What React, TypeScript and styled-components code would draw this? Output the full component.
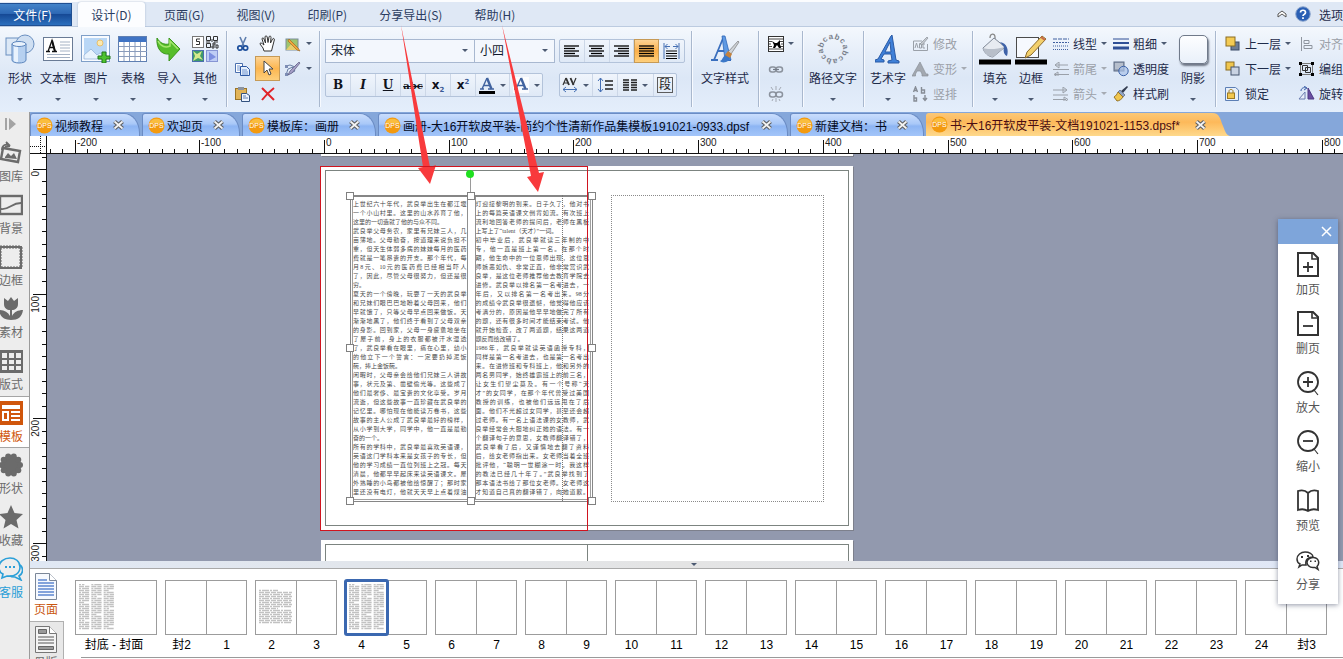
import React, { useEffect, useState } from "react";
import styled, { createGlobalStyle, css } from "styled-components";

const Global = createGlobalStyle`
  *, *::before, *::after { box-sizing: border-box; }
  body {
    margin: 0;
    overflow: hidden;
    background: #fff;
    font-family: "Liberation Sans", "Noto Sans CJK SC", sans-serif;
    font-size: 12px;
    color: #1e2b4a;
  }
  button, select { font: inherit; color: inherit; padding: 0; margin: 0; border: 0; background: none; border-radius: 0; }
  svg { display: block; flex: none; }
`;

/* ---------- frame ---------- */

const Shell = styled.div`
  position: relative;
  display: flex;
  flex-direction: column;
  height: 100vh;
  overflow: hidden;
  white-space: nowrap;
`;

const MenuBar = styled.nav`
  flex: none;
  display: flex;
  align-items: flex-end;
  height: 27px;
  border-top: 2px solid #fbfcfe;
  border-bottom: 1px solid #bccbe0;
  background: #dfe8f5;
  font-family: "Noto Sans CJK SC", sans-serif;
`;

const FileButton = styled.button`
  width: 72px;
  height: 23px;
  margin-right: 6px;
  padding-right: 6px;
  color: #fff;
  background: linear-gradient(#4383c9 0%, #2e69b5 45%, #164a96 50%, #2c6fbd 100%);
  border: 1px solid #1f4f92;
  border-left: 0;
`;

const MenuItem = styled.button<{ $active?: boolean }>`
  height: 24px;
  padding: 0 16px;
  color: #2b3c60;
  ${(p) =>
    p.$active &&
    css`
      width: 67px;
      padding: 0;
      margin: 0 3px -1px 0;
      height: 25px;
      border-radius: 3px 3px 0 0;
      background: #fcfdff;
      box-shadow: 0 0 2px #9fb0c9;
    `}
`;

const MenuEnd = styled.div`
  margin-left: auto;
  height: 24px;
  display: flex;
  align-items: center;
`;

const EndButton = styled.button`
  display: flex;
  align-items: center;
  margin-left: 8px;
`;

const Ribbon = styled.div`
  flex: none;
  display: flex;
  height: 85px;
  padding-top: 4px;
  overflow: hidden;
  background: linear-gradient(#f4f8fd 0%, #e6eef9 30%, #dce7f6 60%, #e4eefb 100%);
`;

const Group = styled.div<{ $w: number }>`
  flex: none;
  display: flex;
  width: ${(p) => p.$w}px;
  height: 76px;
  border-right: 1px solid #a9b8ce;
  box-shadow: 1px 0 0 #f7faff;
`;

const Big = styled.button<{ $w: number }>`
  flex: none;
  width: ${(p) => p.$w}px;
  display: flex;
  flex-direction: column;
  align-items: center;
`;

const BigIcon = styled.span`
  height: 36px;
  display: flex;
  align-items: center;
  justify-content: center;
`;

const BigLabel = styled.span`
  height: 24px;
  line-height: 24px;
`;

const CaretShape = styled.i<{ $dim?: boolean }>`
  flex: none;
  display: block;
  width: 0;
  height: 0;
  border: 3px solid transparent;
  border-bottom: 0;
  border-top-color: ${(p) => (p.$dim ? "#a6abb3" : "#4c5a72")};
`;

const BigCaret = styled(CaretShape)`
  margin-top: 7px;
`;

const Stack = styled.div<{ $w: number }>`
  flex: none;
  width: ${(p) => p.$w}px;
`;

const Small = styled.button<{ $dim?: boolean }>`
  display: flex;
  align-items: center;
  gap: 4px;
  height: 25px;
  color: ${(p) => (p.$dim ? "#9ba0a8" : "#1e2b4a")};
`;

const IconSlot = styled.span`
  width: 17px;
  display: flex;
  justify-content: center;
`;

const ToolGrid = styled.div`
  display: grid;
  grid-template-columns: 25px 25px 25px 8px;
  grid-auto-rows: 25px;
  padding-left: 3px;
`;

const ToolButton = styled.button<{ $on?: boolean }>`
  display: flex;
  align-items: center;
  justify-content: center;
  ${(p) =>
    p.$on &&
    css`
      background: linear-gradient(#fdd394, #fcb650 50%, #fecf7b);
      border: 1px solid #c69a56;
    `}
`;

const FontRows = styled.div`
  display: flex;
  flex-direction: column;
  gap: 10px;
  padding: 8px 0 0 5px;
`;

const FontRow = styled.div`
  display: flex;
  justify-content: space-between;
  width: 360px;
  height: 24px;
`;

const Bar = styled.div<{ $w: number }>`
  display: flex;
  width: ${(p) => p.$w}px;
  border: 1px solid #b3c3da;
  border-radius: 2px;
  background: linear-gradient(#f0f5fc, #dfe9f6);
`;

const BarSet = styled.div<{ $w: number }>`
  display: flex;
  width: ${(p) => p.$w}px;
`;

const BarButton = styled.button<{ $w?: number; $on?: boolean }>`
  flex: 1 1 ${(p) => p.$w ?? 25}px;
  display: flex;
  align-items: center;
  justify-content: center;
  gap: 5px;
  border-right: 1px solid #ccd7e7;
  &:last-child { border-right: 0; }
  ${(p) =>
    p.$on &&
    css`
      background: linear-gradient(#fdd394, #fcb04a 50%, #fecf7b);
      border: 1px solid #c69a56;
      margin: -1px 0;
    `}
`;

const SelectWrap = styled.label<{ $w: number }>`
  position: relative;
  display: block;
  width: ${(p) => p.$w}px;
  border: 1px solid #a8b8d0;
  background: #f3f7fd;
  & + & { border-left: 0; }
  select {
    appearance: none;
    width: 100%;
    height: 22px;
    padding-left: 5px;
    color: #10182c;
    outline: 0;
  }
  i { position: absolute; right: 6px; top: 9px; }
`;

const Glyph = styled.span<{ $kind?: "i" | "u" | "s" | "x" }>`
  font-family: ${(p) => (p.$kind === "x" ? '"DejaVu Sans", sans-serif' : '"DejaVu Serif", "Liberation Serif", serif')};
  font-weight: 700;
  font-size: ${(p) => (p.$kind === "s" ? 10 : 12)}px;
  color: #10131c;
  font-style: ${(p) => (p.$kind === "i" ? "italic" : "normal")};
  text-decoration: ${(p) => (p.$kind === "u" ? "underline" : p.$kind === "s" ? "line-through" : "none")};
  sub, sup { font-size: 7px; line-height: 0; color: #3a5a96; }
`;

/* ---------- body ---------- */

const Body = styled.div`
  flex: 1;
  min-height: 0;
  display: flex;
`;

const Side = styled.aside`
  flex: none;
  width: 30px;
  background: #ededed;
  border-right: 1px solid #9b9b9b;
  overflow: hidden;
`;

const SideToggle = styled.button`
  display: flex;
  align-items: center;
  width: 29px;
  height: 24px;
  padding-left: 5px;
`;

const SideItem = styled.button<{ $tone?: string; $active?: boolean }>`
  display: flex;
  flex-direction: column;
  align-items: flex-start;
  gap: 3px;
  width: 30px;
  height: 52px;
  padding-top: 5px;
  color: ${(p) => p.$tone ?? "#6b6b6b"};
  span { margin-left: -1px; line-height: 18px; }
  ${(p) =>
    p.$active &&
    css`
      background: #fff;
      border-top: 1px solid #a5a5a5;
      border-bottom: 1px solid #a5a5a5;
      padding-top: 4px;
    `}
`;

const Main = styled.main`
  flex: 1;
  min-width: 0;
  display: flex;
  flex-direction: column;
`;

const Tabs = styled.div`
  flex: none;
  display: flex;
  align-items: flex-end;
  gap: 2px;
  height: 24px;
  background: #85a7da;
`;

const Tab = styled.div<{ $w: number; $active?: boolean }>`
  flex: none;
  position: relative;
  display: flex;
  align-items: center;
  width: ${(p) => p.$w}px;
  height: 23px;
  padding-left: 5px;
  color: #050a1c;
  border: 1px solid #6b8cc4;
  border-bottom: 0;
  border-radius: 3px 16px 0 0 / 3px 20px 0 0;
  background: linear-gradient(#c9ddfd 0%, #a9c8f8 45%, #8db5f3 55%, #a3c5f9 100%);
  ${(p) =>
    p.$active &&
    css`
      color: #4a0d12;
      border: 0;
      margin-right: 18px;
      border-radius: 3px 0 0 0;
      background: linear-gradient(#fbc877 0%, #fdb95a 40%, #fed98c 100%);
    `}
`;

const TabTitle = styled.button`
  display: flex;
  align-items: center;
  gap: 2px;
`;

const TabClose = styled.button<{ $active?: boolean }>`
  margin-left: auto;
  margin-right: ${(p) => (p.$active ? 5 : 14)}px;
`;

const TabTail = styled.svg`
  position: absolute;
  left: 100%;
  top: 0;
`;

const RulerRow = styled.div`
  flex: none;
  display: flex;
  height: 18px;
  background: #fff;
  border-bottom: 1px solid #111;
`;

const Corner = styled.div`
  flex: none;
  width: 17px;
  border-right: 1px solid #111;
`;

const Track = styled.div`
  flex: 1;
  min-width: 0;
  overflow: hidden;
`;

const CanvasRow = styled.div`
  flex: 1;
  min-height: 0;
  display: flex;
`;

const VRuler = styled.div`
  flex: none;
  width: 17px;
  background: #fff;
  border-right: 1px solid #111;
  overflow: hidden;
`;

const Canvas = styled.div`
  flex: 1;
  min-width: 0;
  padding-left: 274px;
  display: flex;
  flex-direction: column;
  gap: 10px;
  overflow: hidden;
  background: #9299ae;
`;

const PrevEdge = styled.div`
  flex: none;
  width: 532px;
  height: 2px;
  background: #fff;
  box-shadow: 1px 1px 0 #7d808c;
`;

const Spread = styled.div`
  flex: none;
  position: relative;
  display: flex;
  width: 532px;
  height: 364px;
  padding: 4px;
  background: #fff;
  box-shadow: 1px 1px 0 #7d808c;
`;

const Trim = styled.div`
  flex: 1;
  display: flex;
  border: 1px solid #7c8480;
`;

const Half = styled.div`
  flex: 1;
  & + & { border-left: 1px solid #7c8480; }
`;

const PageMark = styled.div`
  position: absolute;
  z-index: 1;
  left: -1px;
  top: 0;
  width: 268px;
  height: 365px;
  border: 1px solid #d0141f;
  pointer-events: none;
`;

const Margin = styled.div`
  position: absolute;
  left: 290px;
  top: 29px;
  width: 213px;
  height: 307px;
  border: 1px dotted #8a8a8a;
`;

const Frame = styled.div`
  position: absolute;
  left: 29px;
  top: 29px;
  width: 243px;
  height: 307px;
  border: 1px solid #868686;
  border-top-width: 2px;
`;

const FrameInner = styled.div`
  display: flex;
  gap: 7px;
  height: 303px;
  margin: 0 1px;
  border: 1px solid #a0a0a0;
  border-top: 0;
`;

const TextColumn = styled.div`
  flex: 1;
  min-width: 0;
  padding-top: 3px;
  border: solid #909090;
  border-width: 0 1px 0 0;
  & + & { border-width: 0 0 0 1px; margin-right: 1px; }
  font-family: "Liberation Serif", "Noto Sans CJK SC", serif;
  font-size: 6px;
  color: #4a4a4a;
`;

const Line = styled.div<{ $end: boolean }>`
  height: 9px;
  line-height: 9px;
  white-space: normal;
  overflow: hidden;
  text-align-last: ${(p) => (p.$end ? "left" : "justify")};
`;

const Guide = styled.div`
  position: absolute;
  left: 241px;
  top: 29px;
  width: 0;
  height: 306px;
  border-left: 1px dotted #777;
`;

const Handle = styled.i<{ $x: number; $y: number }>`
  position: absolute;
  left: ${(p) => p.$x}px;
  top: ${(p) => p.$y}px;
  z-index: 2;
  width: 8px;
  height: 8px;
  background: #fff;
  border: 1px solid #808080;
`;

const Stalk = styled.i`
  position: absolute;
  left: 149px;
  top: 8px;
  width: 1px;
  height: 18px;
  background: #9a9a9a;
  &::before {
    content: "";
    position: absolute;
    left: -4px;
    top: -4px;
    width: 8px;
    height: 8px;
    border-radius: 50%;
    background: #1fe01f;
  }
`;

/* ---------- page panel ---------- */

const Splitter = styled.button`
  flex: none;
  display: flex;
  justify-content: center;
  align-items: center;
  height: 8px;
  padding-left: 14px;
  background: linear-gradient(90deg, #e0e8f4, #e4e4e4 50%, #e0e8f8);
  border-bottom: 1px solid #a9a9a9;
`;

const Pages = styled.section`
  flex: none;
  display: flex;
  height: 90px;
  background: #fff;
  overflow: hidden;
`;

const PageTabs = styled.div`
  flex: none;
  width: 34px;
`;

const PageTab = styled.button<{ $active?: boolean }>`
  display: flex;
  flex-direction: column;
  align-items: center;
  width: 34px;
  height: 53px;
  padding: 4px 2px 0 0;
  line-height: 18px;
  gap: 1px;
  color: ${(p) => (p.$active ? "#c9560f" : "#6b6b6b")};
  background: ${(p) => (p.$active ? "#fff" : "#e8e8e8")};
  border-right: ${(p) => (p.$active ? "0" : "1px solid #b0b0b0")};
  border-bottom: 1px solid #b0b0b0;
`;

const PageList = styled.div`
  flex: 1;
  min-width: 0;
  padding-left: 4px;
  overflow: hidden;
`;

const Thumbs = styled.div`
  display: flex;
  height: 88px;
`;

const Thumb = styled.button`
  flex: none;
  width: 90px;
  display: flex;
  flex-direction: column;
  padding: 11px 0 0 7px;
  color: #000;
`;

const Sheet = styled.span`
  display: flex;
  width: 82px;
  height: 55px;
  border: 1px solid #9c9c9c;
`;

const Leaf = styled.span<{ $sel?: boolean }>`
  flex: 1;
  padding: 3px 2px;
  & + & { border-left: 1px solid #9c9c9c; }
  ${(p) =>
    p.$sel &&
    css`
      outline: 3px solid #3b68b0;
      outline-offset: -1px;
      border-radius: 1px;
      z-index: 1;
    `}
`;

const Labels = styled.span`
  display: flex;
  width: 90px;
  margin: 0 0 0 -6px;
  height: 20px;
  line-height: 20px;
  text-align: center;
  span { flex: 1; }
`;

const ScrollEdge = styled.div`
  height: 3px;
  margin-left: 13px;
  border-top: 1px solid #9a9a9a;
`;

/* ---------- floating palette ---------- */

const Palette = styled.aside`
  position: absolute;
  top: 219px;
  right: 5px;
  width: 60px;
  height: 385px;
  background: #fff;
  box-shadow: 0 1px 5px rgba(40, 50, 80, 0.5);
`;

const PaletteHead = styled.div`
  display: flex;
  align-items: center;
  justify-content: flex-end;
  height: 25px;
  padding-right: 6px;
  margin-bottom: 7px;
  background: #7ea5da;
`;

const PaletteItem = styled.button`
  display: flex;
  flex-direction: column;
  align-items: center;
  width: 60px;
  height: 59px;
  padding-top: 1px;
  color: #555;
  line-height: 18px;
  gap: 3px;
`;

const Arrows = styled.svg`
  position: absolute;
  left: 0;
  top: 0;
  pointer-events: none;
`;

/* ---------- icons ---------- */

const I = ({ w = 16, h, v, children }: { w?: number; h?: number; v?: string; children: React.ReactNode }) => (
  <svg width={w} height={h ?? w} viewBox={v ?? `0 0 ${w} ${h ?? w}`} fill="none">
    {children}
  </svg>
);

const Caret = ({ dim }: { dim?: boolean }) => <CaretShape $dim={dim} />;

const ShapesIcon = () => (
  <I w={30}>
    <rect x="1" y="4" width="18" height="17" fill="#dce8f6" stroke="#6a8fc0" />
    <circle cx="20" cy="10" r="9" fill="#cfdff2" stroke="#6a8fc0" />
    <path d="M7 10v16c0 4 14 4 14 0V10z" fill="#b6d0f0" stroke="#5d86bd" />
    <path d="M9 12v15c1 1 3 1 4 1V12z" fill="#e8f2fd" />
    <ellipse cx="14" cy="10" rx="7" ry="2.5" fill="#e9f2fc" stroke="#5d86bd" />
  </I>
);
const TextBoxIcon = () => (
  <I w={30} h={26}>
    <rect x=".5" y="1.500" width="29" height="23" fill="#fff" stroke="#6a7b95" />
    <path d="M3 15.500h4M9 15.500h5M5 15.500l4-11 3 11M6 11.500h5" stroke="#111" strokeWidth="1.300" />
    <path d="M9 4.500l3 11" stroke="#111" strokeWidth="2" />
    <path d="M17 6h10M17 9h10M17 12h10M17 15h10M4 18.500h23M4 21.500h23" stroke="#a5b2c4" />
  </I>
);
const PictureIcon = () => (
  <I w={30} h={28}>
    <rect x=".5" y=".5" width="28" height="26" fill="#f8fbff" stroke="#7f9fc8" />
    <rect x="3" y="3" width="23" height="21" fill="#b9d7f6" />
    <circle cx="19" cy="8" r="3" fill="#fbe9b0" stroke="#e9bf6b" />
    <path d="M3 24v-4l7-6 6 6 3-2 7 5v1z" fill="#e9f3fd" stroke="#8caed6" strokeWidth=".7" />
    <path d="M21 17h4v4h4v3h-4v4h-4v-4h-4v-3h4z" fill="#4cc22e" stroke="#23751a" />
  </I>
);
const TableIcon = () => (
  <I w={30} h={28}>
    <rect x=".5" y="1.500" width="28" height="25" fill="#fff" stroke="#5f7fb2" />
    <path d="M1 2h27v5H1z" fill="#3f73c4" />
    <path d="M6 7v19M11.500 7v19M17 7v19M22.500 7v19M1 11.500h28M1 16.500h28M1 21.500h28" stroke="#8a9cbc" />
  </I>
);
const ImportIcon = () => (
  <I w={28} h={28}>
    <path d="M2 3c3 5 7 7 12 6V3l11 11-11 12v-7C7 20 1 14 2 3z" fill="#56bd2b" stroke="#3a961c" />
    <path d="M3 6c3 6 8 7 12 5V6l8 8" stroke="#a5e66e" strokeWidth="1.500" />
  </I>
);
const OtherIcon = () => (
  <I w={28} h={28}>
    <rect x="1.500" y="1.500" width="11" height="11" fill="#fff" stroke="#777" />
    <path d="M9 4H5.500v2.500h3v3H5" stroke="#333" />
    <path d="M15.500 1.500h4v4h-4zM22.500 1.500h4v4h-4zM15.500 8.500h4v4h-4zM22 8h2v2h-2zM25 10h2v3h-2zM21 11h2v2h-2zM21 4v3M15 7h4M23 7h4" stroke="#333" />
    <rect x="1.500" y="15.500" width="11" height="11" fill="#3f9a6a" stroke="#4a6fae" />
    <path d="M2 16l4 3 5-3-2 5 3 4-5-2-5 3 2-5z" fill="#d6e98c" />
    <rect x="15.500" y="15.500" width="11" height="11" fill="#bfcdf5" stroke="#8795d4" />
    <path d="M18 17l7 5-7 4z" fill="#7d8fe0" />
  </I>
);
const CutIcon = () => (
  <I w={16}>
    <path d="M5 1l4 9M11 1L7 10" stroke="#5f7eae" strokeWidth="1.600" />
    <circle cx="5" cy="12" r="2.200" stroke="#1d4f9c" strokeWidth="1.700" />
    <circle cx="10.500" cy="12" r="2.200" stroke="#1d4f9c" strokeWidth="1.700" />
  </I>
);
const HandIcon = () => (
  <I w={18}>
    <path d="M5 16l-1-3-3-4c0-1.500 1.500-1.500 2.500 0L5 10 3 4c0-1.500 1.700-1.500 2 0l1.500 4L6 2c0-1.500 2-1.500 2.200 0L9 7.500 10 2c.3-1.500 2-1.200 2 .3L11.500 8l2-4c.8-1.200 2.200-.5 1.800 1L13.500 12l-1 4z" fill="#fff" stroke="#333" />
  </I>
);
const PicEditIcon = () => (
  <I w={16}>
    <rect x="1" y="3" width="12" height="11" fill="#9fc46b" stroke="#7b8d9c" />
    <path d="M1 14l6-7 6 7z" fill="#e7ce6c" />
    <path d="M4 3l9 9 2 3-3-1-9-9z" fill="#f4a53b" stroke="#9c6a24" strokeWidth=".7" />
  </I>
);
const CopyIcon = () => (
  <I w={17} h={16}>
    <path d="M1.500 2.500h7v9h-7z" fill="#fff" stroke="#4a6fae" />
    <path d="M6.500 5.500h6l3 3v6h-9z" fill="#e6effb" stroke="#2c57a2" />
    <path d="M3 5h3M3 7h3M3 9h3M8 9h5M8 11h6M8 13h6" stroke="#6f93cf" />
  </I>
);
const PointerIcon = () => (
  <I w={12} h={17}>
    <path d="M2 1v12l3-3 2 5 2-1-2-5h4z" fill="#fff" stroke="#444" />
  </I>
);
const WandIcon = () => (
  <I w={17} h={16}>
    <path d="M2 5l4-1 5 2 2-3M2 14l2-6 5-2M3 14l8-4-3-4" stroke="#6b7fa6" />
    <path d="M1 4h3v3H1zM1 12h3v3H1z" fill="#7d8db4" />
    <path d="M15 1l-9 9-2 4 4-2 8-10z" fill="#a7a0c8" stroke="#5a5a80" strokeWidth=".7" />
  </I>
);
const PasteIcon = () => (
  <I w={17} h={16}>
    <rect x="1.500" y="2.500" width="11" height="11" fill="#e2b457" stroke="#9b7426" />
    <rect x="4" y="1" width="6" height="3" fill="#8c94a0" />
    <path d="M7.500 7.500h5l3 2v6h-8z" fill="#eef4fd" stroke="#33527f" />
    <path d="M9 10h3M9 12h5" stroke="#6380b0" />
  </I>
);
const DeleteIcon = () => (
  <I w={16}>
    <path d="M2 2c4 4 8 8 12 12M14 2C9 6 5 10 2 14" stroke="#e0242a" strokeWidth="2" />
  </I>
);

const lines: Record<string, [number, number][]> = {
  left: [[0, 15], [0, 11], [0, 15], [0, 11], [0, 15]],
  center: [[0, 15], [2, 13], [0, 15], [2, 13], [0, 15]],
  right: [[0, 15], [4, 15], [0, 15], [4, 15], [0, 15]],
  full: [[0, 15], [0, 15], [0, 15], [0, 15], [0, 15]],
};
const AlignIcon = ({ kind }: { kind: string }) => (
  <I w={15} h={13}>
    {lines[kind].map(([a, b], i) => (
      <path key={i} d={`M${a} ${i * 2.5 + 1}H${b}`} stroke="#000" strokeWidth="1.300" />
    ))}
  </I>
);
const SpreadIcon = () => (
  <I w={17} h={16}>
    <path d="M1 0v16M16 0v16" stroke="#4670b4" />
    <path d="M2 3.500h5M4.500 1L2 3.500 4.500 6M15 3.500h-5M12.500 1L15 3.500 12.500 6" stroke="#4670b4" />
    <path d="M3 8h11M3 10.500h11M3 13h11M3 15.500h11" stroke="#000" />
  </I>
);
const FontColorIcon = ({ bar }: { bar?: boolean }) => (
  <I w={16} h={17}>
    {!bar && <rect width="16" height="16" fill="#fff" opacity=".8" />}
    <path d="M1 12h4M9 12h6M3 12L8 1M5 8.500h6" stroke="#41639f" strokeWidth="1.400" />
    <path d="M8 1l4.500 11" stroke="#41639f" strokeWidth="2.400" />
    {bar && <path d="M0 15.500h16" stroke="#000" strokeWidth="3" />}
  </I>
);
const KernIcon = () => (
  <I w={16}>
    <path d="M1 8l3-7M2 6h4M14 1l-3 7" stroke="#333" strokeWidth="1.200" />
    <path d="M4 1l3 7M8.500 1l3 7" stroke="#333" strokeWidth="1.900" />
    <path d="M1 12.500h14M4 10l-3 2.500L4 15M12 10l3 2.500L12 15" stroke="#4670b4" />
  </I>
);
const LeadIcon = () => (
  <I w={16}>
    <path d="M3.500 1v14M1 4l2.500-3L6 4M1 12l2.500 3L6 12" stroke="#4670b4" />
    <path d="M8 4h8M8 8h8M8 12h8" stroke="#222" strokeWidth="1.500" />
  </I>
);
const ColumnsIcon = () => (
  <I w={14} h={12}>
    <path d="M0 1h6M0 3.500h6M0 6h6M0 8.500h6M0 11h6M8 1h6M8 3.500h6M8 6h6M8 8.500h6M8 11h6" stroke="#222" strokeWidth="1.300" />
  </I>
);
const ParaBox = styled.span`
  width: 16px;
  height: 16px;
  line-height: 14px;
  text-align: center;
  color: #222;
  border: 1px solid #5c5c5c;
`;
const TextStyleIcon = () => (
  <I w={30} h={32}>
    <path d="M1 27h7M4 27L14 3M7 18h9M12 27h9" stroke="#3a6fbe" strokeWidth="1.800" />
    <path d="M12 3h3l6 24h-6z" fill="#5f9ae3" stroke="#2f66b8" strokeWidth=".8" />
    <path d="M29 9L21 21l-3-2L28 8z" fill="#cfd3d8" stroke="#7a7a7a" strokeWidth=".7" />
    <path d="M20 22c1 3-1 6-4 7-3 1-5 0-6-1 3-1 3-6 7-7z" fill="#3b78c8" />
    <path d="M18 18l4 3-2 4-5-3z" fill="#c5823c" />
  </I>
);
const WrapIcon = () => (
  <I w={16}>
    <rect x=".5" y=".5" width="15" height="15" fill="#fff" stroke="#333" />
    <path d="M1 3h14M1 13h14M1 5.500h3M12 5.500h3M1 8h2M13 8h2M1 10.500h3M12 10.500h3" stroke="#444" />
    <path d="M4 5l3 2h2l3-3v4l1 4h-2L9 9l-2 3H5l1-3z" fill="#000" />
  </I>
);
const LinkIcon = ({ broken }: { broken?: boolean }) => (
  <I w={16}>
    <rect x="1.500" y="6" width="6.500" height="5" rx="2.500" stroke="#8b929d" strokeWidth="1.500" />
    <rect x="8" y="6" width="6.500" height="5" rx="2.500" stroke="#8b929d" strokeWidth="1.500" />
    {!broken && <path d="M5 8.500h6" stroke="#757c88" strokeWidth="1.200" />}
    {broken && <path d="M8 0v4M3 1l2 3M13 1l-2 3M8 12v4M4 15l1-2M12 15l-1-2" stroke="#a3a9b3" />}
  </I>
);
const PathGlyph = styled.text`
  font: 700 8px "Liberation Sans", sans-serif;
  fill: #7b818c;
  text-anchor: middle;
`;
const PathTextIcon = () => (
  <I w={32} h={32}>
    {"abcabcabcabc".split("").map((c, i) => (
      <PathGlyph key={i} x="16" y="6" transform={`rotate(${i * 30 - 100} 16 16)`}>
        {c}
      </PathGlyph>
    ))}
  </I>
);
const WordArtIcon = () => (
  <I w={26} h={30}>
    <path d="M17 1l4 25 3 1v2H13v-2l4-1-1-6H9l-3 5 3 1v2H0v-2l3-1L16 2zM15 8l-5 10h6z" fill="#3f80d8" stroke="#2a5aa5" fillRule="evenodd" />
  </I>
);
const ModifyIcon = () => (
  <I w={17} h={16}>
    <path d="M10 5H1.500v9.500h14V8" stroke="#9aa0a8" />
    <path d="M3 12l1.500-5L6 12M7.500 7.500V12h2V7.500zM13 8h-2v4h2" stroke="#9aa0a8" />
    <path d="M8 8l7-7 1 1-6 7z" fill="#c6cad0" stroke="#8a9098" strokeWidth=".7" />
  </I>
);
const WarpIcon = () => (
  <I w={17} h={16}>
    <path d="M8 1l6 12h2v2h-6v-2L8.500 10H5l-1.500 3v2H0z" fill="#a3a8b0" stroke="#8a9098" strokeWidth=".7" />
  </I>
);
const VerticalIcon = () => (
  <I w={17} h={16}>
    <path d="M1.500 6l2-5 2 5M2.300 4.500h2.500M2 9v6h2.500V12H2M9.500 1v6h3V4H9.500M13 9v5M11 12l2 2.500 2-2.500" stroke="#868c95" strokeWidth="1.400" />
  </I>
);
const FillIcon = () => (
  <I w={32} h={32}>
    <path d="M11 5C11 0 16 0 16 4v6" stroke="#888" strokeWidth="1.300" />
    <path d="M4 15L15 5l11 9-12 10c-4 0-9-4-10-9z" fill="#e7ebf1" stroke="#7f8896" />
    <path d="M4 15c5 2 15 1 22-1L14 24c-4 0-9-4-10-9z" fill="#b8bfca" />
    <path d="M21 9c7 1 9 8 7 14-3-1-4-5-3-9z" fill="#3e62a8" />
    <path d="M0 29h32" stroke="#000" strokeWidth="5" />
  </I>
);
const BorderIcon = () => (
  <I w={32} h={32}>
    <rect x="1.500" y="4.500" width="22" height="20" fill="#f6f9fe" stroke="#4b4b4b" />
    <path d="M12 19L27 3l4 3-15 16-6 3z" fill="#f3d06c" stroke="#8b6a2c" />
    <path d="M26 4l4 3" stroke="#c96a4a" strokeWidth="2" />
    <path d="M0 29h32" stroke="#000" strokeWidth="5" />
  </I>
);
const DashIcon = () => (
  <I w={16} h={12}>
    <path d="M0 1h16" stroke="#4060a0" strokeDasharray="4 1" />
    <path d="M0 4.500h16" stroke="#4060a0" strokeDasharray="2 1" />
    <path d="M0 8h16M0 11.500h16" stroke="#4060a0" strokeDasharray="1 1" />
  </I>
);
const ArrowLinesIcon = ({ flip }: { flip?: boolean }) => (
  <I w={16} h={14}>
    {flip ? (
      <path d="M0 3h13M10 0l4 3-4 3zM0 8h15M0 12.500h13M11 10l4 2.500-4 2.500z" stroke="#9aa0a9" />
    ) : (
      <path d="M2 3h13M6 0L2 3l4 3zM0 7.500h16M2 12.500h14M5 10l-4 2.500 4 2.500z" stroke="#9aa0a9" />
    )}
  </I>
);
const WeightIcon = () => (
  <I w={16} h={12}>
    <path d="M0 1h16" stroke="#2f4f96" />
    <path d="M0 5h16" stroke="#2f4f96" strokeWidth="2" />
    <path d="M0 10h16" stroke="#2f4f96" strokeWidth="3" />
  </I>
);
const OpacityIcon = () => (
  <I w={16}>
    <rect x="1" y="1" width="10" height="9" fill="#97a2b4" stroke="#5d6b83" />
    <path d="M2 3h8M2 5h8M2 7h8" stroke="#d5dbe5" />
    <circle cx="10.500" cy="10" r="4.700" fill="#a9c2e8" fillOpacity=".7" stroke="#3c62a8" />
  </I>
);
const BrushIcon = () => (
  <I w={16}>
    <path d="M15 1l-5 6-2-2 6-5z" fill="#333c50" />
    <path d="M7 4l5 5-2 2-5-5z" fill="#8fa3c4" stroke="#55617a" strokeWidth=".7" />
    <path d="M5 6l5 5c-1 2-4 4-6 4l-3-4c2-1 3-3 4-5z" fill="#f0c64e" stroke="#94742a" />
  </I>
);
const ShadowSwatch = styled.span`
  width: 29px;
  height: 29px;
  border: 1px solid #707a8a;
  border-radius: 5px;
  background: linear-gradient(#fdfeff, #e9f0fa);
  box-shadow: 1px 2px 2px #6f7887;
`;
const LayerIcon = ({ down }: { down?: boolean }) => (
  <I w={15}>
    {down ? (
      <>
        <rect x="1" y="1" width="8" height="8" fill="#f0c64e" stroke="#8a6d22" />
        <rect x="6" y="6" width="8" height="8" fill="#c9d3e3" stroke="#44546f" />
      </>
    ) : (
      <>
        <rect x="6" y="6" width="8" height="8" fill="#6d7c95" stroke="#3a4a66" />
        <rect x="1" y="1" width="9" height="9" fill="#f4cb54" stroke="#8a6d22" />
      </>
    )}
  </I>
);
const LockIcon = () => (
  <I w={15}>
    <path d="M.5 1.500h10l3 2.500v10.500H.5z" fill="#e7effa" stroke="#5c7fb5" />
    <path d="M4 7V5c0-2 4-2 4 0v2" stroke="#9c7a25" />
    <rect x="2.500" y="7" width="7" height="5.500" fill="#f2c74e" stroke="#9c7a25" />
  </I>
);
const AlignObjIcon = () => (
  <I w={14}>
    <path d="M1.500 0v14M4 3.500h5v3H4zM4 8.500h8v3H4z" stroke="#8f959e" />
  </I>
);
const GroupIcon = () => (
  <I w={17} h={16}>
    <path d="M2.500 2.500h12v11h-12z" stroke="#777" />
    <path d="M4.500 4.500h5v5h-5zM7.500 6.500h5v5h-5z" stroke="#333" />
    <path d="M1 1h3v3H1zM13 1h3v3h-3zM1 12h3v3H1zM13 12h3v3h-3z" fill="#000" />
  </I>
);
const RotateIcon = () => (
  <I w={17} h={15}>
    <path d="M1 13l6-7v7z" fill="#e9eefa" stroke="#6a7cae" />
    <path d="M10 2l6 11h-6z" fill="#6a4ea0" stroke="#4d3a84" />
    <path d="M3 5c0-3 3-4 5-3M6 0l3 2-3 2" stroke="#3b5fa8" />
  </I>
);
const DpsIcon = () => (
  <svg width="17" height="17" viewBox="0 0 17 17">
    <circle cx="8.500" cy="8.500" r="8" fill="#f39a10" />
    <path d="M1.500 6a8 8 0 0 1 14 0z" fill="#fbc64a" opacity=".8" />
    <text x="8.500" y="11" textAnchor="middle" fontSize="7" fontFamily="Liberation Sans, sans-serif" fill="#fff">
      DPS
    </text>
  </svg>
);
const CloseIcon = () => (
  <I w={13} h={12}>
    <path d="M2.500 2.500l8 7M10.500 2.500l-8 7" stroke="#5f6266" strokeWidth="4.200" />
    <path d="M2.500 2.500l8 7M10.500 2.500l-8 7" stroke="#f4f4f4" strokeWidth="1.700" />
  </I>
);

const sideItems: { label: string; tone?: string; active?: boolean; icon: React.ReactNode }[] = [
  {
    label: "图库",
    icon: (
      <I w={23} h={24}>
        <path d="M3 7l17 3-2 11-17-3z" stroke="currentColor" strokeWidth="2.400" />
        <path d="M5 16l3-4 3 3 3-3 3 6-12-1z" fill="currentColor" />
        <path d="M2 9c0-5 4-7 8-4L6 1M10 5l-5 1" stroke="currentColor" strokeWidth="1.800" />
      </I>
    ),
  },
  {
    label: "背景",
    icon: (
      <I w={23} h={24}>
        <rect x="0" y="3" width="22" height="18" stroke="currentColor" strokeWidth="2.400" />
        <path d="M1 16c9 1 10-6 20-6" stroke="currentColor" strokeWidth="1.800" />
      </I>
    ),
  },
  {
    label: "边框",
    icon: (
      <I w={23} h={24}>
        <rect x="0" y="2" width="21" height="21" stroke="currentColor" strokeWidth="2" />
        <rect x="0" y="2" width="21" height="21" stroke="currentColor" strokeWidth="3" strokeDasharray="2 1" />
      </I>
    ),
  },
  {
    label: "素材",
    icon: (
      <I w={23} h={24}>
        <path d="M4 1l4 3 3-4 3 4 4-3v6c0 4-3 6-6 6v6c2-4 6-6 11-6-1 7-5 10-12 10C4 23 0 20-1 13c5 0 9 2 11 6v-6C7 13 4 11 4 7z" fill="currentColor" />
      </I>
    ),
  },
  {
    label: "版式",
    icon: (
      <I w={23} h={24}>
        <path d="M0 1h23v23H0z" fill="currentColor" />
        <path d="M2 4h5v5H2zM9 4h5v5H9zM16 4h5v5h-5zM2 11h5v4H2zM9 11h5v4H9zM16 11h5v4h-5zM2 17h5v4H2zM9 17h5v4H9zM16 17h5v4h-5z" fill="#ededed" />
      </I>
    ),
  },
  {
    label: "模板",
    tone: "#d0560c",
    active: true,
    icon: (
      <I w={23} h={24}>
        <path d="M0 0h23v24H0z" fill="currentColor" />
        <path d="M2 4h18v4H2zM2 10h7v10H2zM11 10h9v2h-9zM11 14h9v2h-9zM11 18h9v2h-9z" fill="#fff" />
        <path d="M4 12h3v6H4z" fill="currentColor" />
      </I>
    ),
  },
  {
    label: "形状",
    icon: (
      <I w={23} h={24}>
        <circle cx="11" cy="12" r="10" fill="currentColor" />
        {Array.from({ length: 10 }, (_, i) => (
          <circle key={i} cx={11 + 9 * Math.cos(i * 0.628)} cy={12 + 9 * Math.sin(i * 0.628)} r="3" fill="currentColor" />
        ))}
      </I>
    ),
  },
  {
    label: "收藏",
    icon: (
      <I w={23} h={24}>
        <path d="M11 0l3.500 8 8.500 1-6.500 6 2 8.500L11 19l-7.500 4.500 2-8.500L-1 9l8.500-1z" fill="currentColor" />
      </I>
    ),
  },
  {
    label: "客服",
    tone: "#2a9fd8",
    icon: (
      <I w={23} h={24}>
        <path d="M10 1C4 1-1 5-1 10c0 3 1 6 4 7l-1 4 5-2c8 1 13-3 13-9S15 1 10 1z" stroke="currentColor" strokeWidth="1.600" />
        <path d="M20 8c4 3 3 9-1 11l2 4-6-3c-2 0-4 0-5-1" stroke="currentColor" strokeWidth="1.600" />
        <path d="M5 9h2v2H5zM9 9h2v2H9zM13 9h2v2h-2z" fill="currentColor" />
      </I>
    ),
  },
];

const zoomGlass = (plus: boolean) => (
  <I w={24} h={26}>
    <circle cx="12" cy="12" r="10" stroke="#333" strokeWidth="1.800" />
    <path d={plus ? "M7 12h10M12 7v10" : "M7 12h10"} stroke="#333" strokeWidth="1.800" />
    <path d="M18 20l4 5" stroke="#333" strokeWidth="1.200" />
  </I>
);
const pageGlyph = (plus: boolean) => (
  <I w={24} h={26}>
    <path d="M2 1h15l5 5v18H2z" stroke="#333" strokeWidth="2" />
    <path d="M16 1v6h6" stroke="#333" strokeWidth="1.600" />
    <path d={plus ? "M7 15h10M12 10v10" : "M7 15h10"} stroke="#333" strokeWidth="1.800" />
  </I>
);
const paletteItems: [string, React.ReactNode][] = [
  ["加页", pageGlyph(true)],
  ["删页", pageGlyph(false)],
  ["放大", zoomGlass(true)],
  ["缩小", zoomGlass(false)],
  [
    "预览",
    <I w={24} h={26}>
      <path d="M12 5C9 2 5 2 2 3v19c3-1 7-1 10 1 3-2 7-2 10-1V3c-3-1-7-1-10 2zv18" stroke="#333" strokeWidth="1.800" />
    </I>,
  ],
  [
    "分享",
    <I w={24} h={26}>
      <path d="M9 5c-4 0-8 3-8 7 0 2 1 4 3 5l-1 3 3-2h4c-1-5 2-8 7-8 0-3-4-5-8-5z" stroke="#333" strokeWidth="1.500" />
      <path d="M17 10.500c-4 0-6 3-6 5s2 5 6 5h2l3 2-1-3c3-3 2-9-4-9z" stroke="#333" strokeWidth="1.500" />
      <path d="M5 9h2v2H5zM11 8h2v2h-2zM14 13.500h1.500V15H14zM18.500 13.500H20V15h-1.500z" fill="#333" />
    </I>,
  ],
];

/* ---------- data ---------- */

const bigInsert: [string, number, React.ReactNode][] = [
  ["形状", 38, <ShapesIcon />],
  ["文本框", 38, <TextBoxIcon />],
  ["图片", 38, <PictureIcon />],
  ["表格", 36, <TableIcon />],
  ["导入", 36, <ImportIcon />],
  ["其他", 36, <OtherIcon />],
];

const tabs: { title: string; w: number; active?: boolean }[] = [
  { title: "视频教程", w: 110 },
  { title: "欢迎页", w: 98 },
  { title: "模板库：画册", w: 134 },
  { title: "画册-大16开软皮平装-简约个性清新作品集模板191021-0933.dpsf", w: 410 },
  { title: "新建文档：书", w: 134 },
  { title: "书-大16开软皮平装-文档191021-1153.dpsf*", w: 286, active: true },
];

/* A trailing "|" closes a paragraph, so that line is set ragged. */
const columnOne = `上世纪六十年代，武良举出生在都江堰
一个小山村里。这里的山水养育了他，
这里的一切造就了他的与众不同。|
武良举父母务农，家里有兄妹三人，几
亩薄地。父母勤奋，按道理来说负担不
重，但天生体弱多病的妹妹每月的医药
费就是一笔昂贵的开支。那个年代，每
月8元、10元的医药费已经相当吓人
了，因此，尽管父母很努力，但还是很
穷。|
夏天的一个傍晚，玩耍了一天的武良举
和兄妹们眼巴巴地盼着父母回来，他们
早就饿了，只等父母早点回来做饭。天
渐渐地黑了，他们终于看到了父母双亲
的身影。回到家，父母一身疲惫地坐在
了屋子前，身上的衣服都被汗水湿透
了，武良举看在眼里，痛在心里，幼小
的他立下一个誓言：一定要扔掉泥饭
碗，捧上金饭碗。|
闲暇时，父母亲会给他们兄妹三人讲故
事，状元及第、凿壁偷光等。这些成了
他们最奢侈、最宝贵的文化享受。岁月
流逝，但这些故事一直珍藏在武良举的
记忆里。哪怕现在他能读万卷书，这些
故事的主人公成了武良举最好的榜样，
从小学到大学，同学中，他一直是最勤
奋的一个。|
所有的学科中，武良举最喜欢英语课，
英语这门学科本来是女孩子的专长，但
他的学习成绩一直位列班上之冠。每天
清晨，他都早早起床来读英语课文。屋
外熟睡的小鸟都被他给惊醒了；那时家
里还没有电灯，他就天天早上点着煤油`.split("\n");

const columnTwo = `灯迎接黎明的到来。日子久了，他对书
上的每篇英语课文倒背如流。有次班上
流利地回答老师的提问后，老师在黑板
上写上了“talent（天才）”一词。|
初中毕业后，武良举就读三年制的中
专，他一直是班上第一名。在那个时
期，他生命中的一位恩师出现，这位恩
师嫉恶如仇、非常正直，他非常赏识武
良举，是这位老师推荐他去教育学院去
进修。武良举以排名第一名考进去，一
年后，又以排名第一名考出来。98分
的成绩令武良举很遗憾，他觉得他应该
考满分的，原因是他早早地做完了所有
的题，还有很多时间才能结束考试。他
就开始检查，改了两道题，结果这两道
题反而给改错了。|
1986年，武良举就读英语函授专科，
同样是第一名考进去，也是第一名考出
来。在进修班和专科班上，他和另外的
两名男同学，始终雄霸班上的前三名，
让女生们望尘莫及。有一个号称“天
才”的女同学，在那个年代曾受过美国
教授的训练，也被他们远远甩在了后
面。他们不光超过女同学，甚至还会超
过老师。有一名上语法课的女教师，武
良举经常会大胆地纠正她的语法。有一
个翻译句子的意思，女教师翻译错了，
武良举看了后，又谨慎地去翻了资料
后，给女老师指出来。女老师当着全班
批评他，“聪明一世糊涂一时。我这样
的教法已经几十年了。”武良举找到了
那本语法书给了那位女老师。女老师这
才知道自己真的翻译错了，向她道歉。`.split("\n");

const Story = ({ rows }: { rows: string[] }) => (
  <TextColumn>
    {rows.map((r, i) => (
      <Line key={i} $end={r.endsWith("|")}>
        {r.replace("|", "")}
      </Line>
    ))}
  </TextColumn>
);

/* Ruler ticks: ten units apart, as many as the window has room for. */
const STEP = 12.47;
const ZERO_X = 277;
const ZERO_Y = 15;

const useWindowSize = () => {
  const [size, setSize] = useState([window.innerWidth, window.innerHeight]);
  useEffect(() => {
    const update = () => setSize([window.innerWidth, window.innerHeight]);
    window.addEventListener("resize", update);
    return () => window.removeEventListener("resize", update);
  }, []);
  return size;
};

const HorizontalRuler = () => {
  const [width] = useWindowSize();
  const last = Math.floor((width - 47 - ZERO_X) / STEP);
  return (
    <svg width="100%" height="17" shapeRendering="crispEdges">
      {Array.from({ length: last + 23 }, (_, k) => k - 22).map((n) => {
        const x = Math.round(ZERO_X + n * STEP) + 0.5;
        const major = n % 10 === 0;
        return (
          <g key={n}>
            <path d={`M${x} ${major ? 4 : 13}V17`} stroke="#111" />
            {major && (
              <text x={x + 1.5} y="10" fontSize="10" fontFamily="Liberation Sans, sans-serif" fill="#222">
                {n * 10}
              </text>
            )}
          </g>
        );
      })}
    </svg>
  );
};

const VerticalRuler = () => {
  const [, height] = useWindowSize();
  const last = Math.floor((height - 252 - ZERO_Y) / STEP);
  return (
    <svg width="16" height="100%" shapeRendering="crispEdges">
      {Array.from({ length: last + 2 }, (_, k) => k - 1).map((n) => {
        const y = Math.round(ZERO_Y + n * STEP) + 0.5;
        const major = n % 10 === 0;
        return (
          <g key={n}>
            <path d={`M${major ? 3 : 12} ${y}H16`} stroke="#111" />
            {major && (
              <text
                transform={`translate(9 ${y + 1.5}) rotate(-90)`}
                textAnchor="end"
                fontSize="10"
                fontFamily="Liberation Sans, sans-serif"
                fill="#222"
              >
                {n * 10}
              </text>
            )}
          </g>
        );
      })}
    </svg>
  );
};

/* Greeked copy shown inside the page thumbnails. */
const Greek = ({ cols, w, h, top = 0 }: { cols: number; w: number; h: number; top?: number }) => (
  <svg width={w} height={h + top} viewBox={`0 0 ${w} ${h + top}`}>
    {Array.from({ length: cols }, (_, c) =>
      Array.from({ length: Math.floor(h / 2) }, (_, r) => {
        const cw = w / cols;
        const short = (r * 7 + c * 3) % 9 === 0 ? cw * 0.4 : 0;
        return (
          <path
            key={`${c}-${r}`}
            d={`M${c * cw + 1} ${top + r * 2 + 0.5}H${(c + 1) * cw - 1 - short}`}
            stroke="#c2c2c2"
            strokeWidth="1.500"
            strokeDasharray={r % 2 ? "5 1" : "2 1 7 1"}
          />
        );
      })
    )}
  </svg>
);

const pageLabels: string[][] = [
  ["封底 - 封面"],
  ["封2", "1"],
  ...Array.from({ length: 11 }, (_, i) => [String(i * 2 + 2), String(i * 2 + 3)]),
  ["24", "封3"],
];

const handles: [number, number][] = [
  [25, 26], [146, 26], [267, 26], [25, 178], [267, 178], [25, 331], [146, 331], [267, 331],
];

const Row = ({ icon, label, dim, caret }: { icon: React.ReactNode; label: string; dim?: boolean; caret?: boolean }) => (
  <Small $dim={dim}>
    <IconSlot>{icon}</IconSlot>
    {label}
    {caret && <Caret dim={dim} />}
  </Small>
);

export default function App() {
  return (
    <Shell>
      <Global />
      <MenuBar>
        <FileButton>文件(F)</FileButton>
        <MenuItem $active>设计(D)</MenuItem>
        {["页面(G)", "视图(V)", "印刷(P)", "分享导出(S)", "帮助(H)"].map((m) => (
          <MenuItem key={m}>{m}</MenuItem>
        ))}
        <MenuEnd>
          <EndButton aria-label="收起">
            <I w={10} h={8}>
              <path d="M1 4l4-3 4 3v3L5 4 1 7z" fill="#fff" stroke="#555" />
            </I>
          </EndButton>
          <EndButton aria-label="帮助">
            <I w={16}>
              <circle cx="8" cy="8" r="7.300" fill="#2a5fb4" stroke="#90a9cf" />
              <path d="M5.500 6.500c0-3 5-3 5 0 0 2-2.500 1.700-2.500 3.500M8 11.300v1.700" stroke="#fff" strokeWidth="1.700" />
            </I>
          </EndButton>
          <EndButton>选项</EndButton>
        </MenuEnd>
      </MenuBar>

      <Ribbon>
        <Group $w={227}>
          <Stack $w={1} />
          {bigInsert.map(([label, w, icon]) => (
            <Big key={label} $w={w}>
              <BigIcon>{icon}</BigIcon>
              <BigLabel>{label}</BigLabel>
              <BigCaret />
            </Big>
          ))}
        </Group>

        <Group $w={93}>
          <ToolGrid>
            <ToolButton aria-label="剪切"><CutIcon /></ToolButton>
            <ToolButton aria-label="平移"><HandIcon /></ToolButton>
            <ToolButton aria-label="编辑图片"><PicEditIcon /></ToolButton>
            <ToolButton aria-label="更多图片编辑"><Caret /></ToolButton>
            <ToolButton aria-label="复制"><CopyIcon /></ToolButton>
            <ToolButton aria-label="选择" $on><PointerIcon /></ToolButton>
            <ToolButton aria-label="编辑路径"><WandIcon /></ToolButton>
            <ToolButton aria-label="更多路径编辑"><Caret /></ToolButton>
            <ToolButton aria-label="粘贴"><PasteIcon /></ToolButton>
            <ToolButton aria-label="删除"><DeleteIcon /></ToolButton>
          </ToolGrid>
        </Group>

        <Group $w={372}>
          <FontRows>
            <FontRow>
              <BarSet $w={230}>
                <SelectWrap $w={150}>
                  <select aria-label="字体"><option>宋体</option></select>
                  <Caret />
                </SelectWrap>
                <SelectWrap $w={80}>
                  <select aria-label="字号"><option>小四</option></select>
                  <Caret />
                </SelectWrap>
              </BarSet>
              <Bar $w={126}>
                <BarButton aria-label="左对齐"><AlignIcon kind="left" /></BarButton>
                <BarButton aria-label="居中"><AlignIcon kind="center" /></BarButton>
                <BarButton aria-label="右对齐"><AlignIcon kind="right" /></BarButton>
                <BarButton aria-label="两端对齐" $on><AlignIcon kind="full" /></BarButton>
                <BarButton aria-label="分散对齐"><SpreadIcon /></BarButton>
              </Bar>
            </FontRow>
            <FontRow>
              <Bar $w={218}>
                <BarButton><Glyph>B</Glyph></BarButton>
                <BarButton><Glyph $kind="i">I</Glyph></BarButton>
                <BarButton><Glyph $kind="u">U</Glyph></BarButton>
                <BarButton><Glyph $kind="s">abc</Glyph></BarButton>
                <BarButton><Glyph $kind="x">x<sub>2</sub></Glyph></BarButton>
                <BarButton><Glyph $kind="x">x<sup>2</sup></Glyph></BarButton>
                <BarButton $w={34} aria-label="文字颜色"><FontColorIcon bar /><Caret /></BarButton>
                <BarButton $w={32} aria-label="文字底色"><FontColorIcon /><Caret /></BarButton>
              </Bar>
              <BarSet $w={126}>
                <Bar $w={118}>
                  <BarButton $w={33} aria-label="字间距"><KernIcon /><Caret /></BarButton>
                  <BarButton $w={25} aria-label="行间距"><LeadIcon /></BarButton>
                  <BarButton $w={37} aria-label="分栏"><ColumnsIcon /><Caret /></BarButton>
                  <BarButton $w={22}><ParaBox>段</ParaBox></BarButton>
                </Bar>
              </BarSet>
            </FontRow>
          </FontRows>
        </Group>

        <Group $w={67}>
          <Big $w={66}>
            <BigIcon><TextStyleIcon /></BigIcon>
            <BigLabel>文字样式</BigLabel>
          </Big>
        </Group>

        <Group $w={44}>
          <Stack $w={8} />
          <Stack $w={35}>
            <Small aria-label="文字环绕"><IconSlot><WrapIcon /></IconSlot><Caret /></Small>
            <Small aria-label="链接"><IconSlot><LinkIcon /></IconSlot></Small>
            <Small aria-label="断开链接"><IconSlot><LinkIcon broken /></IconSlot></Small>
          </Stack>
        </Group>

        <Group $w={61}>
          <Big $w={60}>
            <BigIcon><PathTextIcon /></BigIcon>
            <BigLabel>路径文字</BigLabel>
            <BigCaret />
          </Big>
        </Group>

        <Group $w={109}>
          <Big $w={48}>
            <BigIcon><WordArtIcon /></BigIcon>
            <BigLabel>艺术字</BigLabel>
            <BigCaret />
          </Big>
          <Stack $w={60}>
            <Row dim icon={<ModifyIcon />} label="修改" />
            <Row dim caret icon={<WarpIcon />} label="变形" />
            <Row dim icon={<VerticalIcon />} label="竖排" />
          </Stack>
        </Group>

        <Group $w={243}>
          <Stack $w={4} />
          <Big $w={36}>
            <BigIcon><FillIcon /></BigIcon>
            <BigLabel>填充</BigLabel>
            <BigCaret />
          </Big>
          <Big $w={36}>
            <BigIcon><BorderIcon /></BigIcon>
            <BigLabel>边框</BigLabel>
            <BigCaret />
          </Big>
          <Stack $w={3} />
          <Stack $w={60}>
            <Row caret icon={<DashIcon />} label="线型" />
            <Row dim caret icon={<ArrowLinesIcon />} label="箭尾" />
            <Row dim caret icon={<ArrowLinesIcon flip />} label="箭头" />
          </Stack>
          <Stack $w={62}>
            <Row caret icon={<WeightIcon />} label="粗细" />
            <Row icon={<OpacityIcon />} label="透明度" />
            <Row icon={<BrushIcon />} label="样式刷" />
          </Stack>
          <Big $w={38}>
            <BigIcon><ShadowSwatch /></BigIcon>
            <BigLabel>阴影</BigLabel>
            <BigCaret />
          </Big>
        </Group>

        <Stack $w={8} />
        <Stack $w={74}>
          <Row caret icon={<LayerIcon />} label="上一层" />
          <Row caret icon={<LayerIcon down />} label="下一层" />
          <Row icon={<LockIcon />} label="锁定" />
        </Stack>
        <Stack $w={60}>
          <Row dim icon={<AlignObjIcon />} label="对齐" />
          <Row icon={<GroupIcon />} label="编组" />
          <Row icon={<RotateIcon />} label="旋转" />
        </Stack>
      </Ribbon>

      <Body>
        <Side>
          <SideToggle aria-label="展开">
            <I w={12} h={14}>
              <path d="M0 1h2v12H0zM4 1l7 6-7 6z" fill="#a4a4a4" />
            </I>
          </SideToggle>
          {sideItems.map((s) => (
            <SideItem key={s.label} $tone={s.tone} $active={s.active}>
              {s.icon}
              <span>{s.label}</span>
            </SideItem>
          ))}
        </Side>

        <Main>
          <Tabs>
            {tabs.map((t) => (
              <Tab key={t.title} $w={t.w} $active={t.active}>
                <TabTitle>
                  <DpsIcon />
                  {t.title}
                </TabTitle>
                <TabClose aria-label="关闭" $active={t.active}><CloseIcon /></TabClose>
                {t.active && (
                  <TabTail width="18" height="23" viewBox="0 0 18 23">
                    <defs>
                      <linearGradient id="tail" x1="0" y1="0" x2="0" y2="1">
                        <stop offset="0" stopColor="#fbc877" />
                        <stop offset=".4" stopColor="#fdb95a" />
                        <stop offset="1" stopColor="#fed98c" />
                      </linearGradient>
                    </defs>
                    <path d="M0 0c8 0 8 6 11 13 2 5 3 9 7 10H0z" fill="url(#tail)" />
                  </TabTail>
                )}
              </Tab>
            ))}
          </Tabs>

          <RulerRow>
            <Corner>
              <svg width="16" height="17" shapeRendering="crispEdges">
                <path d="M0 10.500h16M10.500 0v17" stroke="#111" strokeDasharray="1 1" />
              </svg>
            </Corner>
            <Track><HorizontalRuler /></Track>
          </RulerRow>

          <CanvasRow>
            <VRuler><VerticalRuler /></VRuler>
            <Canvas>
              <PrevEdge />
              <Spread>
                <Trim><Half /><Half /></Trim>
                <Margin />
                <Frame>
                  <FrameInner>
                    <Story rows={columnOne} />
                    <Story rows={columnTwo} />
                  </FrameInner>
                </Frame>
                <Guide />
                <PageMark />
                <Stalk />
                {handles.map(([x, y]) => (
                  <Handle key={`${x}-${y}`} $x={x} $y={y} />
                ))}
              </Spread>
              <Spread>
                <Trim><Half /><Half /></Trim>
              </Spread>
            </Canvas>
          </CanvasRow>

          <Splitter aria-label="折叠页面栏"><Caret /></Splitter>
          <Pages>
            <PageTabs>
              <PageTab $active>
                <I w={22} h={27}>
                  <path d="M.5.500h14l7 7v19H.5z" fill="#f6f9fe" stroke="#7b8798" />
                  <path d="M14.500.500v7h7" fill="#fff" stroke="#7b8798" />
                  <path d="M3 7h9M3 10h16M3 13h16M3 16h16M3 19h16M3 22h16" stroke="#5e86cf" strokeWidth="1.500" />
                </I>
                页面
              </PageTab>
              <PageTab>
                <I w={22} h={27}>
                  <path d="M.5.500h14l7 7v19H.5z" fill="#f4f4f4" stroke="#777" />
                  <path d="M14.500.500v7h7" fill="#fff" stroke="#777" />
                  <path d="M3.500 3.500h8v4h-8zM3.500 20.500h15v3h-15z" fill="#999" stroke="#666" />
                  <path d="M3 11h16M3 14h16M3 17h16" stroke="#8a8a8a" strokeWidth="1.300" />
                </I>
                母版
              </PageTab>
            </PageTabs>
            <PageList>
              <Thumbs>
                {pageLabels.map((labels, i) => (
                  <Thumb key={i}>
                    <Sheet>
                      <Leaf $sel={i === 3}>
                        {(i === 0 || i === 3) && <Greek cols={3} w={37} h={46} />}
                        {i === 2 && <Greek cols={1} w={35} h={34} top={6} />}
                      </Leaf>
                      {labels.length > 1 && <Leaf />}
                    </Sheet>
                    <Labels>
                      {labels.map((l) => (
                        <span key={l}>{l}</span>
                      ))}
                    </Labels>
                  </Thumb>
                ))}
              </Thumbs>
              <ScrollEdge />
            </PageList>
          </Pages>
        </Main>
      </Body>

      <Palette>
        <PaletteHead>
          <button aria-label="关闭工具栏">
            <I w={11} h={11}>
              <path d="M1 1l9 9M10 1l-9 9" stroke="#fff" strokeWidth="1.500" />
            </I>
          </button>
        </PaletteHead>
        {paletteItems.map(([label, icon]) => (
          <PaletteItem key={label}>
            {icon}
            {label}
          </PaletteItem>
        ))}
      </Palette>

      <Arrows width="560" height="200">
        <path d="M401 25L430 167l6-2-6 19-12-16 5-1z" fill="#f83a3c" />
        <path d="M502 25L539 173l5-1-6 20-11-15 4-1z" fill="#f83a3c" />
      </Arrows>
    </Shell>
  );
}
